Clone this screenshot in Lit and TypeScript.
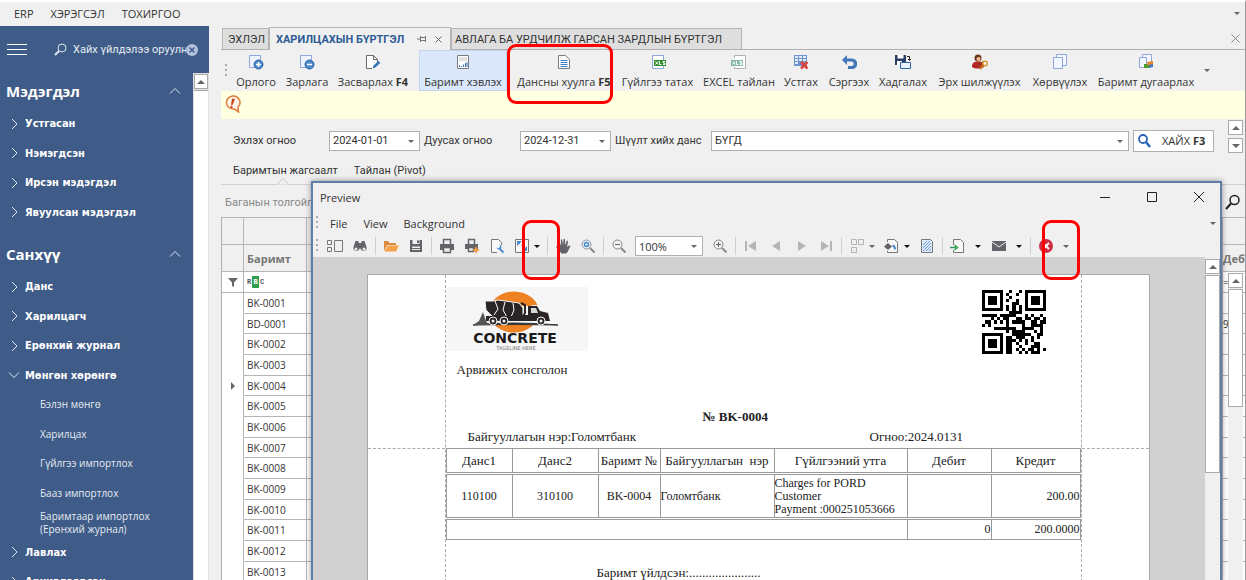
import { LitElement, html, svg, css, nothing } from "lit";
import { customElement } from "lit/decorators.js";

const blueSheet = svg`<path d="M1.500 1.500h11v12h-11z" fill="#eef3ff" stroke="#8fa6dc"/>`;

const I: Record<string, unknown> = {
  add: svg`${blueSheet}<circle cx="10.500" cy="10.500" r="4.500" fill="#4d88c9" stroke="#2e62a8"/><path d="M10.500 8v5M8 10.500h5" stroke="#fff" stroke-width="1.500"/>`,
  sub: svg`${blueSheet}<circle cx="10.500" cy="10.500" r="4.500" fill="#4d88c9" stroke="#2e62a8"/><path d="M8 10.500h5" stroke="#fff" stroke-width="1.500"/>`,
  edit: svg`<path d="M7 14.500H1.500v-13h7l4 4V8M8.500 1.500v4h4" fill="#fff" stroke="#6b6b6b"/><path d="M7.500 14.500l1-3 5-4.500 1.800 2-5 4.600z" fill="#3674b5"/>`,
  report: svg`<path d="M2.500 1.500h11v13h-11z" fill="#fff" stroke="#7a7a7a"/><path d="M4 4h8M4 6h8" stroke="#c3c3c3"/><path d="M4.500 13v-2M6.500 13v-1M8.500 13v-2.500M10.500 13V9M12 13V8" stroke="#3674b5"/>`,
  doc: svg`<path d="M2.500 1.500h7l4 4v9h-11z" fill="#fff" stroke="#7a7a7a"/><path d="M4.500 6.500h7M4.500 8.500h7M4.500 10.500h7M4.500 12.500h7" stroke="#3d7fc6"/>`,
  xls: svg`<path d="M2.500 1.500h11v13h-11z" fill="#fff" stroke="#8fa6dc"/><path d="M4 6h12v6H4z" fill="#2f8f2f"/><path d="M5.500 7.500l2.500 3M8 7.500l-2.500 3M9.500 7v3.500h2M15 7.500h-2V9h2v1.500h-2" stroke="#fff" fill="none"/>`,
  xlsPale: svg`<path d="M3.500 4V1.500h11v13h-11V13" fill="#fff" stroke="#a9b5ad"/><path d="M0 6h12v6H0z" fill="#86b9a3"/><path d="M1.500 7.500l2.500 3M4 7.500l-2.500 3M5.500 7v3.500h2M11 7.500H9V9h2v1.500H9" stroke="#fff" fill="none"/>`,
  del: svg`<path d="M1 1h13v11H1z" fill="#6f93cf"/><path d="M2 2h3v2H2zM6 2h3v2H6zM10 2h3v2h-3zM2 5h3v2H2zM6 5h3v2H6zM10 5h3v2h-3zM2 8h3v2H2z" fill="#e2ecff"/><path d="M8 8l6.500 6.500M14.500 8L8 14.500" stroke="#d9453a" stroke-width="2.500"/>`,
  undo: svg`<path d="M6 1L1 6l5 5V7.500h4.500a2 2 0 0 1 0 4.500H7v3h4a4.500 4.500 0 0 0 0-10.500H6z" fill="#4277b8"/>`,
  save2: svg`<path d="M0 1h11v10H0z" fill="#2c3e66"/><path d="M2.500 1h6v3.500h-6zM2 7h5v4H2z" fill="#fff"/><path d="M12 2.500h2.500V6M13 5l1.500 1.500L16 5" stroke="#222" fill="none"/><path d="M5.500 8.500h10v6h-10z" fill="#eaf2ff" stroke="#2f63a7"/>`,
  user: svg`<circle cx="6" cy="4" r="3.500" fill="#6b3a1e"/><circle cx="6.500" cy="5" r="2" fill="#f1bd92"/><path d="M0 13c0-5 3-5.500 6-5.500s6 1 6 5.500c-3 2-9 2-12 0z" fill="#b32626"/><path d="M6 12l5-5" stroke="#6d4a14"/><circle cx="13" cy="9.500" r="2.200" fill="#fff" stroke="#d9922b" stroke-width="1.500"/><path d="M11.500 11L8 15" stroke="#c47a1e" stroke-width="2"/>`,
  copy: svg`<path d="M4.500.500h10v11h-10z" fill="#f4f7ff" stroke="#8fa6dc"/><path d="M1.500 3.500h9v11h-9z" fill="#f4f7ff" stroke="#8fa6dc"/>`,
  number: svg`<path d="M4.500.500h9v10h-9z" fill="#f4f7ff" stroke="#8fa6dc"/><path d="M1.500 3.500h7v10h-7z" fill="#f4f7ff" stroke="#8fa6dc"/><path d="M6 10h5v4H6z" fill="#4e9c2f"/><path d="M9 8l6-1v4l-5 1z" fill="#e4862a"/><path d="M11 11l4-1v3l-4 1z" fill="#3d74c9"/>`,
  thumbs: svg`<path d="M.500 2.500h4v4h-4zM.500 9.500h4v4h-4zM7.500 2.500h8v11h-8z" fill="none" stroke="#777"/>`,
  find: svg`<path d="M3.500 3h3v2h3V3h3l2 6a3 3 0 1 1-6 1.500h-1A3 3 0 1 1 1.500 9z" fill="#62646a"/><circle cx="4" cy="11" r="1.500" fill="#eee"/><circle cx="12" cy="11" r="1.500" fill="#eee"/>`,
  open: svg`<path d="M1 13V3h4l1.500 2H13v2H4z" fill="#d98a3b"/><path d="M4.500 7.500H16L13 13.500H1.500z" fill="#f6a14a"/>`,
  floppy: svg`<path d="M2 2h12v12H2z" fill="#62646a"/><path d="M4.500 2h7v4h-7zM4 8.500h8V12H4z" fill="#eee"/><path d="M9 2.500h2V5H9zM4 10h8v1H4z" fill="#62646a"/>`,
  print: svg`<path d="M4.500 6V1.500h7V6" fill="#eee" stroke="#62646a" stroke-width="1.500"/><path d="M1 6h14v6H1z" fill="#62646a"/><path d="M4.500 9.500h7v5h-7z" fill="#eee" stroke="#62646a" stroke-width="1.500"/>`,
  quick: svg`<path d="M4.500 6V1.500h6V6" fill="#eee" stroke="#62646a" stroke-width="1.500"/><path d="M1 6h13v5H1z" fill="#62646a"/><path d="M4.500 9.500h5v4h-5z" fill="#eee" stroke="#62646a" stroke-width="1.500"/><path d="M12 8l1.200 2.800L16 12l-2.800 1.200L12 16l-1.200-2.800L8 12l2.800-1.200z" fill="#f39a3c"/>`,
  setup: svg`<path d="M8 14.500H2.500v-13h7l3 3V7" fill="#f7f7f7" stroke="#777"/><path d="M7.500 9.500a2.500 2.500 0 1 0 3-3l.5 2.500-1.500 1.500z" fill="#4a8ccb"/><path d="M10 10l4.500 4.500" stroke="#4a8ccb" stroke-width="2"/>`,
  scale: svg`<path d="M1.500 1.500h13v13h-13z" fill="#f7f7f7" stroke="#777"/><path d="M3 8V3h5zM13 8v5H8z" fill="#4a8ccb"/><path d="M4 4l8 8" stroke="#4a8ccb" stroke-dasharray="3 2"/>`,
  hand: svg`<path d="M4.500 8.500L2.800 3.500l1.200-.500L6 7.500 5.800 1.500h1.400L8 7l.6-6H10l.1 6.200 1.800-4.700 1.200.5-1 6L14 7.500l1.500.500-3 6-1.500 1.500H6.500L1 9l1-1z" fill="#62646a"/>`,
  mag: svg`<circle cx="6.500" cy="6.500" r="4.500" fill="#e2ecf7" stroke="#999"/><circle cx="6.500" cy="6.500" r="2" fill="none" stroke="#4a8ccb" stroke-width="1.500"/><path d="M10 10l4.500 4.500" stroke="#888" stroke-width="2"/>`,
  zout: svg`<circle cx="6.500" cy="6.500" r="4.500" fill="none" stroke="#888"/><path d="M4 6.500h5" stroke="#666"/><path d="M10 10l4.500 4.500" stroke="#888" stroke-width="2"/>`,
  zin: svg`<circle cx="6.500" cy="6.500" r="4.500" fill="none" stroke="#888"/><path d="M4 6.500h5M6.500 4v5" stroke="#666"/><path d="M10 10l4.500 4.500" stroke="#888" stroke-width="2"/>`,
  first: svg`<path d="M3 3v10" stroke="#b5b5b5" stroke-width="2"/><path d="M13 3v10L5 8z" fill="#b5b5b5"/>`,
  prev: svg`<path d="M12 3v10L4 8z" fill="#b5b5b5"/>`,
  next: svg`<path d="M5 3v10l8-5z" fill="#b5b5b5"/>`,
  last: svg`<path d="M3 3v10l8-5z" fill="#b5b5b5"/><path d="M13 3v10" stroke="#b5b5b5" stroke-width="2"/>`,
  multi: svg`<path d="M2.500 1.500h5v5h-5zM9.500 1.500h5v5h-5zM2.500 9.500h5v5h-5z" fill="none" stroke="#b5b5b5"/>`,
  color: svg`<path d="M3.500 4V1.500h7l3 3v10h-10V13" fill="#f7f7f7" stroke="#777"/><path d="M4 5l4 3.500L4 12 0 8.500z" fill="#62646a"/><path d="M8.500 7.500q2.500.500 2.500 4" stroke="#4a8ccb" fill="none" stroke-width="2"/>`,
  water: svg`<path d="M2.500 1.500h9l2 2v11h-11z" fill="#dbe9f8" stroke="#777"/><path d="M4 7l4-4M4 10l7-7M4 13l8-8M7 13l5-5M10 13l2-2" stroke="#6b9fd4"/>`,
  exp: svg`<path d="M3.500 7V1.500h7l3 3v10h-10V12" fill="#f7f7f7" stroke="#777"/><path d="M0 9.500h6M4.500 7l3 2.500-3 2.500" stroke="#2f9e57" fill="none" stroke-width="1.500"/>`,
  mail: svg`<path d="M1 3h14v10H1z" fill="#62646a"/><path d="M1 4l7 5 7-5" stroke="#eee" fill="none"/>`,
  close: svg`<circle cx="8" cy="8" r="7" fill="#cf2b42"/><path d="M5 5l6 6M11 5l-6 6" stroke="#fff" stroke-width="1.800"/>`,
};

const icon = (name: string) =>
  html`<svg class="ic" width="16" height="16" viewBox="0 0 16 16" aria-hidden="true">${I[name]}</svg>`;

const CSS_BASE = css`
  * { box-sizing: border-box; }
  button { font: inherit; color: inherit; background: none; border: 0; padding: 0; }
  select, input { font: inherit; color: inherit; margin: 0; }
  svg { display: block; flex: none; }
  ul { list-style: none; margin: 0; padding: 0; }
  a { color: inherit; text-decoration: none; }
  .tri { display: block; width: 0; height: 0; flex: none; border: 3px solid transparent; border-top-color: #666; border-bottom: 0; }
  .tri.up { border: 4px solid transparent; border-bottom-color: #666; border-top: 0; }
  .tri.dark { border-top-color: #111; }
  .grip { width: 2px; height: 14px; flex: none; background: repeating-linear-gradient(#aaa 0 2px, transparent 2px 5px); }
  .combo { position: relative; display: block; }
  .combo select { width: 100%; height: 20px; padding: 0 3px; appearance: none; background: #fff; border: 1px solid #b0b0b0; border-radius: 0; }
  .combo .tri { position: absolute; right: 6px; top: 9px; }
  .mark { position: absolute; border: 3px solid #f00; border-radius: 9px; pointer-events: none; z-index: 5; }
  .sbtn { display: flex; align-items: center; justify-content: center; width: 15px; height: 15px; background: #fff; border: 1px solid #a9a9a9; }
`;

const UI = css`"Open Sans", "Noto Sans", sans-serif`;
const NARROW = css`Roboto, "Noto Sans", sans-serif`;

@customElement("side-nav")
class SideNav extends LitElement {
  static styles = [CSS_BASE, css`
    :host { display: flex; flex-direction: column; width: 209px; height: 100%; background: #3f5b87; color: #fff; overflow: hidden; }
    .search { display: flex; align-items: center; height: 47px; flex: none; padding: 0 11px 0 7px; font: 11px ${NARROW}; }
    .burger { width: 20px; height: 11px; margin-right: 27px; border-top: 1px solid #fff; border-bottom: 1px solid #fff; background: linear-gradient(#fff, #fff) center / 100% 1px no-repeat; }
    .search input { flex: 1; width: 0; border: 0; padding: 0 0 0 6px; background: none; color: #e6ebf3; outline: 0; }
    .row { display: flex; flex: 1; min-height: 0; }
    nav { flex: 1; overflow: hidden; }
    .bar { width: 16px; padding: 1px; background: #e0e0e0; display: flex; flex-direction: column; gap: 1px; }
    .bar .sbtn { width: 14px; }
    .thumb { flex: 1; background: #fff; border-top: 1px solid #a9a9a9; }
    h2 { display: flex; align-items: center; justify-content: space-between; height: 36px; margin: 0; padding: 0 12px 0 6px; font: bold 15px "Open Sans", sans-serif; }
    section + section { margin-top: 9px; }
    li { display: flex; align-items: center; height: 29px; padding-left: 8px; font: bold 11px "DejaVu Sans Condensed", "DejaVu Sans", sans-serif; }
    li:nth-child(even) { height: 30px; }
    li svg { margin-right: 5px; }
    li.sub { padding-left: 40px; font: 10px/13px ${UI}; color: #e6ebf3; }
    .two { white-space: pre-line; }
  `];
  item(t: string, open = false) {
    return html`<li><svg width="12" height="12" viewBox="0 0 12 12" fill="none" stroke="#dfe6f2">
      <path d=${open ? "M1 3.500l5 5 5-5" : "M4 1l5 5-5 5"} /></svg><a href="#">${t}</a></li>`;
  }
  head(t: string) {
    return html`<h2>${t}<svg width="12" height="8" fill="none" stroke="#dfe6f2"><path d="M1 6.500l5-5 5 5" /></svg></h2>`;
  }
  render() {
    return html`
      <div class="search">
        <button class="burger" aria-label="Цэс"></button>
        <svg width="13" height="13" viewBox="0 0 13 13" fill="none" stroke="#dfe6f2"><circle cx="8" cy="5" r="4" /><path d="M5 8l-4 4" stroke-width="2" /></svg>
        <input aria-label="Хайх" value="Хайх үйлдэлээ оруулн" />
        <svg width="12" height="12" viewBox="0 0 12 12"><circle cx="6" cy="6" r="6" fill="#b3c3dc" /><path d="M3.500 3.500l5 5M8.500 3.500l-5 5" stroke="#3f5b87" stroke-width="1.500" /></svg>
      </div>
      <div class="row">
        <nav>
          <section>${this.head("Мэдэгдэл")}
            <ul>${["Устгасан", "Нэмэгдсэн", "Ирсэн мэдэгдэл", "Явуулсан мэдэгдэл"].map((t) => this.item(t))}</ul>
          </section>
          <section>${this.head("Санхүү")}
            <ul>
              ${["Данс", "Харилцагч", "Ерөнхий журнал"].map((t) => this.item(t))}
              ${this.item("Мөнгөн хөрөнгө", true)}
              ${["Бэлэн мөнгө", "Харилцах", "Гүйлгээ импортлох", "Бааз импортлох", "Баримтаар импортлох\n(Ерөнхий журнал)"].map(
                (t) => html`<li class="sub"><a class="two" href="#">${t}</a></li>`)}
              ${this.item("Лавлах")}${this.item("Архивлагдсан")}
            </ul>
          </section>
        </nav>
        <div class="bar"><button class="sbtn" aria-label="Дээш"><span class="tri up"></span></button><div class="thumb"></div></div>
      </div>`;
  }
}

const TOOLS: [string, string, string?][] = [
  ["add", "Орлого"], ["sub", "Зарлага"], ["edit", "Засварлах", "F4"], ["report", "Баримт хэвлэх"],
  ["doc", "Дансны хуулга", "F5"], ["xls", "Гүйлгээ татах"], ["xlsPale", "EXCEL тайлан"], ["del", "Устгах"],
  ["undo", "Сэргээх"], ["save2", "Хадгалах"], ["user", "Эрх шилжүүлэх"], ["copy", "Хөрвүүлэх"], ["number", "Баримт дугаарлах"],
];

const QR = [
  "111111100100101111111",
  "100000101001001000001",
  "101110100100001011101",
  "101110101001001011101",
  "101110100011001011101",
  "100000101010101000001",
  "111111101010101111111",
  "000000000111100000000",
  "111110111110001010010",
  "000101011001101101101",
  "011010101011110011011",
  "101000001000010011110",
  "000011111110011110010",
  "000000001011110001010",
  "111111100011111100110",
  "100000101101110010100",
  "101110101110101010000",
  "101110101101001001100",
  "101110101100100011100",
  "100000101101010110101",
  "111111101100101011100",
];

@customElement("print-preview")
class PrintPreview extends LitElement {
  static styles = [CSS_BASE, css`
    :host { display: flex; flex-direction: column; background: #f0f0f0; border: 1px solid #5f7ea8; border-width: 2px 2px 0; box-shadow: 0 0 6px #0006; color: #333; font: 11px ${UI}; }
    .title { display: flex; align-items: center; height: 28px; flex: none; padding: 0 12px 0 7px; }
    .title b { flex: 1; font-weight: normal; }
    .title button { margin-left: 29px; }
    .menu { display: flex; align-items: center; height: 24px; flex: none; padding: 0 4px 0 3px; }
    .menu a { margin-left: 12px; margin-right: 4px; }
    .menu .tri { margin-left: auto; }
    .tools { display: flex; align-items: center; height: 22px; flex: none; padding: 0 3px; }
    .tools .grip { margin-right: 4px; }
    .b { width: 25px; height: 22px; display: flex; align-items: center; justify-content: center; flex: none; }
    .a { position: relative; width: 10px; height: 22px; display: flex; align-items: center; flex: none; }
    .a.wide { width: 16px; justify-content: center; }
    .sep { width: 6px; height: 18px; flex: none; background: linear-gradient(#cfcfcf, #cfcfcf) center / 1px 100% no-repeat; }
    .zoom { width: 68px; margin: 0 4px; flex: none; }
    .m1 { left: -12px; width: 38px; top: -15px; height: 60px; }
    .m2 { left: -16px; width: 38px; top: -15px; height: 60px; }
    .body { flex: 1; min-height: 0; display: flex; background: #d1d1d1; }
    .canvas { flex: 1; overflow: hidden; display: flex; justify-content: center; padding: 17px 2px 0 0; }
    .paper { width: 783px; flex: none; background: #fff; border: 1px solid #a8a8a8; border-bottom: 0; color: #222; font: 13px "Liberation Serif", serif;
      display: grid; grid-template-columns: 78px 1fr 68px; }
    .side { display: grid; grid-template-rows: 174px 1fr; }
    .side::before { content: ""; border-bottom: 1px dashed #aaa; }
    .side.l { border-right: 1px dashed #aaa; }
    .side.r { border-left: 1px dashed #aaa; }
    .top { display: flex; justify-content: space-between; height: 77px; padding: 12px 35px 0 0; }
    .qr { margin-top: 3px; }
    .co { margin: 0 0 0 11px; height: 36px; line-height: 36px; }
    .no { margin: 0; padding: 16px 0 0 257px; height: 42px; line-height: 26px; }
    .meta { display: flex; height: 18px; line-height: 14px; padding-left: 22px; }
    .meta span:first-child { width: 402px; }
    table { width: 634px; border-collapse: collapse; table-layout: fixed; }
    th { font-weight: normal; height: 25px; white-space: pre; padding: 0; }
    th, td { border: 1px solid #999; }
    td { padding: 0; text-align: center; font-size: 12px; line-height: 13px; }
    tbody td { height: 45px; border-top: 3px double #999; }
    tfoot td { height: 21px; border-top: 3px double #999; }
    td.l { text-align: left; } td.r { text-align: right; }
    .sign { margin: 26px 0 0 151px; line-height: 14px; }
    .bar { width: 15px; display: flex; flex-direction: column; gap: 1px; padding-top: 2px; background: #f0f0f0; }
    .bar .thumb { height: 198px; background: #fff; border: 1px solid #a9a9a9; }
  `];
  b(n: string, l: string) { return html`<button class="b" aria-label=${l}>${icon(n)}</button>`; }
  a(wide = false, dark = true, mark = "") {
    return html`<button class="a ${wide ? "wide" : ""}" aria-label="More"><span class="tri ${dark ? "dark" : ""}"></span>
      ${mark ? html`<span class="mark ${mark}"></span>` : nothing}</button>`;
  }
  render() {
    const sep = html`<span class="sep"></span>`;
    return html`
      <div class="title"><b>Preview</b>
        <button aria-label="Minimize"><svg width="18" height="18"><path d="M4 9.500h10" stroke="#222" /></svg></button>
        <button aria-label="Maximize"><svg width="18" height="18"><path d="M4.500 4.500h9v9h-9z" fill="none" stroke="#222" /></svg></button>
        <button aria-label="Close"><svg width="18" height="18"><path d="M4 4l10 10M14 4L4 14" stroke="#222" /></svg></button>
      </div>
      <div class="menu"><span class="grip"></span><a href="#">File</a><a href="#">View</a><a href="#">Background</a><span class="tri"></span></div>
      <div class="tools"><span class="grip"></span>
        ${this.b("thumbs", "Thumbnails")}${this.b("find", "Search")}${sep}
        ${this.b("open", "Open")}${this.b("floppy", "Save")}${sep}
        ${this.b("print", "Print")}${this.b("quick", "Quick print")}${this.b("setup", "Page setup")}${this.b("scale", "Scale")}${this.a(false, true, "m1")}${sep}
        ${this.b("hand", "Hand tool")}${this.b("mag", "Magnifier")}${sep}
        ${this.b("zout", "Zoom out")}
        <span class="combo zoom"><select aria-label="Zoom"><option>100%</option></select><span class="tri"></span></span>
        ${this.b("zin", "Zoom in")}${sep}
        ${this.b("first", "First page")}${this.b("prev", "Previous page")}${this.b("next", "Next page")}${this.b("last", "Last page")}${sep}
        ${this.b("multi", "Multiple pages")}${this.a(false, false)}${this.b("color", "Color")}${this.a()}${this.b("water", "Watermark")}${sep}
        ${this.b("exp", "Export")}${this.a(true)}${this.b("mail", "Send")}${this.a(true)}${sep}
        ${this.b("close", "Exit")}${this.a(true, false, "m2")}
      </div>
      <div class="body">
        <div class="canvas"><div class="paper">
          <div class="side l"></div>
          <div>
            <div class="top">
              <svg width="142" height="64" viewBox="0 0 142 64" role="img" aria-label="Concrete">
                <path d="M0 0h142v64H0z" fill="#f6f6f6" />
                <ellipse cx="68" cy="25" rx="25" ry="20.500" fill="#ee8122" />
                <path d="M42 19h42l3-1h12v20H42z" fill="#f6f6f6" />
                <path d="M27 38q40-4 85 0-40-1-85 0z" fill="#333" stroke="#333" />
                <path d="M27 38l6-4 4-9 3 9 3 4z" fill="#555" />
                <path d="M39 14h8l5-1 21 3 4 5v11H60l-12-1-8-8z" fill="#2b2426" stroke="#f6f6f6" />
                <path d="M49 14l3 8-4 6M59 15l-2 8 5 9M67 16l1 7-3 7" stroke="#fff" fill="none" />
                <path d="M75 16l4 2v8l-3 5" stroke="#2b2426" fill="none" stroke-width="2" />
                <path d="M82 19h9l3 5 8 2 2 8H76v-6h6z" fill="#2b2426" />
                <path d="M85 21h5l2 5h-7z" fill="#d8d8d8" />
                <path d="M40 29h40v5H40z" fill="#2b2426" />
                <g fill="#2b2426" stroke="#f6f6f6"><circle cx="47" cy="34" r="4" /><circle cx="58" cy="34" r="4" /><circle cx="95" cy="34" r="4" /></g>
                <g fill="#f6f6f6"><circle cx="47" cy="34" r="1.500" /><circle cx="58" cy="34" r="1.500" /><circle cx="95" cy="34" r="1.500" /></g>
                <text x="69" y="56" text-anchor="middle" font-family="DejaVu Sans" font-weight="bold" font-size="14" fill="#1d1a1b">CONCRETE</text>
                <text x="70" y="63" text-anchor="middle" font-family="DejaVu Sans" font-size="5" fill="#777">TAGELINE HERE</text>
              </svg>
              <svg class="qr" width="64" height="64" viewBox="0 0 21 21" shape-rendering="crispEdges" role="img" aria-label="QR">
                ${QR.flatMap((r, y) => [...r].map((c, x) => c === "1" ? svg`<rect x=${x} y=${y} width="1" height="1"/>` : nothing))}
              </svg>
            </div>
            <p class="co">Арвижих сонсголон</p>
            <p class="no"><b>№ BK-0004</b></p>
            <div class="meta"><span>Байгууллагын нэр:Голомтбанк</span><span>Огноо:2024.0131</span></div>
            <table>
              <colgroup><col width="66" /><col width="86" /><col width="62" /><col width="114" /><col width="133" /><col width="84" /><col width="89" /></colgroup>
              <thead><tr>${["Данс1", "Данс2", "Баримт №", "Байгууллагын  нэр", "Гүйлгээний утга", "Дебит", "Кредит"].map((t) => html`<th>${t}</th>`)}</tr></thead>
              <tbody><tr><td>110100</td><td>310100</td><td>BK-0004</td><td class="l">Голомтбанк</td>
                <td class="l">Charges for PORD Customer<br />Payment :000251053666</td><td></td><td class="r">200.00</td></tr></tbody>
              <tfoot><tr><td colspan="5"></td><td class="r">0</td><td class="r">200.0000</td></tr></tfoot>
            </table>
            <p class="sign">Баримт үйлдсэн:......................</p>
          </div>
          <div class="side r"></div>
        </div></div>
        <div class="bar"><button class="sbtn" aria-label="Up"><span class="tri up"></span></button><div class="thumb"></div></div>
      </div>`;
  }
}

const ROWS = ["BK-0001", "BD-0001", "BK-0002", "BK-0003", "BK-0004", "BK-0005", "BK-0006", "BK-0007", "BK-0008", "BK-0009", "BK-0010", "BK-0011", "BK-0012", "BK-0013"];

@customElement("app-root")
class AppRoot extends LitElement {
  static styles = [CSS_BASE, css`
    :host { display: flex; flex-direction: column; height: 100vh; overflow: hidden; background: #f0f0f0; color: #333; font: 11px ${UI}; border-top: 2px solid #fff; border-right: 1px solid #999; }
    .menubar { display: flex; align-items: center; gap: 17px; height: 24px; flex: none; padding: 0 5px 2px 14px; }
    .menubar .tri { margin-left: auto; }
    .cols { flex: 1; min-height: 0; display: grid; grid-template-columns: 209px minmax(0, 1fr); column-gap: 12px; }
    main { position: relative; display: flex; flex-direction: column; min-width: 0; overflow: hidden; }
    .tabs { display: flex; align-items: flex-end; height: 24px; flex: none; padding-left: 1px; border-bottom: 1px solid #b0b0b0; font-family: ${NARROW}; }
    .tab { display: flex; align-items: center; height: 21px; padding: 0 5px; background: #dedede; border: 1px solid #b5b5b5; border-bottom: 0; white-space: nowrap; }
    .tab.home { width: 47px; }
    .tab.third { width: 291px; padding: 0 3px; }
    .tab.on { width: 182px; height: 23px; margin-bottom: -1px; background: #f0f0f0; color: #2c5b95; font-weight: bold; padding: 0 8px 0 6px; gap: 8px; }
    .tab.on span { flex: 1; text-align: left; }
    .x { margin: 0 5px 6px auto; }
    .tools { display: grid; grid-template-columns: 10px 50px 52px 80px 98px 106px 81px 82px 42px 54px 54px 99px 62px 110px 12px; align-items: stretch; height: 41px; flex: none; }
    .tools .grip { align-self: center; margin-left: 4px; }
    .tools .tri { align-self: center; justify-self: center; }
    .tool { position: relative; display: flex; flex-direction: column; align-items: center; gap: 4px; padding-top: 4px; white-space: nowrap; line-height: 16px; }
    .tool.on { margin: 0 4px 0 6px; background: #dbe7fa; border: 1px solid #c2d4ee; padding-top: 3px; }
    .m0 { left: -4px; right: 4px; top: -6px; height: 60px; }
    .info { height: 28px; flex: none; padding: 4px 3px; background: #ffffe1; }
    .filters { display: grid; grid-template-columns: minmax(0, 1fr) 15px; gap: 14px; height: 37px; flex: none; padding: 1px 2px 0 12px; font-family: ${NARROW}; }
    form { display: grid; grid-template-columns: 92px 91px 92px 91px 92px minmax(0, 1fr) 81px; column-gap: 4px; align-items: center; padding-top: 6px; height: 35px; }
    .go { display: flex; align-items: center; gap: 11px; height: 22px; padding-left: 4px; background: #fff; border: 1px solid #b0b0b0; font-family: ${UI}; }
    .spin { display: flex; flex-direction: column; gap: 3px; }
    .spin .down { border: 4px solid transparent; border-top-color: #666; border-bottom: 0; }
    .subtabs { display: flex; gap: 16px; height: 29px; flex: none; align-items: center; padding: 0 12px; border-bottom: 1px solid #d0d0d0; position: relative; font-family: ${NARROW}; }
    .notch { position: absolute; left: 56px; bottom: -1px; }
    .group { display: flex; align-items: center; justify-content: space-between; height: 33px; flex: none; padding: 2px 4px 0; color: #888; border-bottom: 1px solid #b5b5b5; font-family: ${NARROW}; }
    .grid { position: relative; flex: 1; min-height: 0; overflow: hidden; background: #fff; border-left: 1px solid #b0b0b0; font-size: 10px; }
    table { width: 100%; border-collapse: separate; border-spacing: 0; table-layout: fixed; }
    th, td { padding: 0 3px; text-align: left; white-space: nowrap; overflow: hidden; border-right: 1px solid #b5b5b5; border-bottom: 1px solid #b5b5b5; }
    th { height: 27px; background: #f0f0f0; color: #777; font-weight: bold; font-size: 11px; }
    th:last-child, td:last-child { border-right: 0; padding: 0; }
    td { height: 21px; }
    tbody tr:nth-child(3n) td { height: 20px; }
    tbody td:first-child { border-bottom-color: transparent; }
    tbody td:first-child > * { margin: 0 auto; }
    tbody tr.f td:first-child { border-bottom-color: #b5b5b5; }
    .cur { width: 0; height: 0; display: block; border: 4px solid transparent; border-left-color: #666; border-right: 0; }
    .vs { position: absolute; right: 2px; top: 55px; bottom: 0; width: 15px; background: #f0f0f0; display: flex; flex-direction: column; gap: 1px; }
    .vs .thumb { height: 118px; background: #fff; border: 1px solid #a9a9a9; }
    print-preview { position: absolute; left: 90px; right: 23px; top: 155px; bottom: 0; z-index: 3; }
  `];
  render() {
    return html`
      <header class="menubar"><a href="#">ERP</a><a href="#">ХЭРЭГСЭЛ</a><a href="#">ТОХИРГОО</a><span class="tri"></span></header>
      <div class="cols">
        <side-nav></side-nav>
        <main>
          <div class="tabs">
            <button class="tab home">ЭХЛЭЛ</button>
            <button class="tab on"><span>ХАРИЛЦАХЫН БҮРТГЭЛ</span>
              <svg width="10" height="8" fill="none" stroke="#777"><path d="M0 4h3M3.500 1v6M3.500 2.500h5v3h-5M8.500 1v6" /></svg>
              <svg width="7" height="7" stroke="#666"><path d="M.500.500l6 6M6.500.500l-6 6" /></svg></button>
            <button class="tab third">АВЛАГА БА УРДЧИЛЖ ГАРСАН ЗАРДЛЫН БҮРТГЭЛ</button>
            <button class="x" aria-label="Хаах"><svg width="9" height="9" stroke="#888"><path d="M.500.500l8 8M8.500.500l-8 8" /></svg></button>
          </div>
          <div class="tools"><span class="grip"></span>
            ${TOOLS.map(([n, t, k]) => html`<button class="tool ${n === "report" ? "on" : ""}">${icon(n)}<span>${t}${k ? html` <b>${k}</b>` : nothing}</span>
              ${n === "doc" ? html`<span class="mark m0"></span>` : nothing}</button>`)}
            <span class="tri"></span>
          </div>
          <div class="info"><svg width="18" height="18" viewBox="0 0 18 18"><path d="M8.500 1a7 6.500 0 1 0 2 13l4 3-.500-5A7 6.500 0 0 0 8.500 1z" fill="#fff6ea" stroke="#e07b3a" stroke-width="1.500" /><path d="M8 3.500l3 .500-2.500 6H7z" fill="#c8431f" /><circle cx="7.500" cy="12" r="1.200" fill="#c8431f" /></svg></div>
          <div class="filters">
            <form>
              <label for="d1">Эхлэх огноо</label><span class="combo"><select id="d1"><option>2024-01-01</option></select><span class="tri"></span></span>
              <label for="d2">Дуусах огноо</label><span class="combo"><select id="d2"><option>2024-12-31</option></select><span class="tri"></span></span>
              <label for="ac">Шүүлт хийх данс</label><span class="combo"><select id="ac"><option>БҮГД</option></select><span class="tri"></span></span>
              <button type="button" class="go"><svg width="13" height="14" fill="none" stroke="#2a63b8"><circle cx="5" cy="5" r="4" stroke-width="1.800" /><path d="M8 8l4 5" stroke-width="2.500" /></svg><span>ХАЙХ <b>F3</b></span></button>
            </form>
            <div class="spin"><button class="sbtn" aria-label="Дээш"><span class="tri up"></span></button><button class="sbtn" aria-label="Доош"><span class="tri down"></span></button></div>
          </div>
          <div class="subtabs"><a href="#">Баримтын жагсаалт</a><a href="#">Тайлан (Pivot)</a>
            <svg class="notch" width="12" height="7" fill="#f0f0f0" stroke="#c4c4c4"><path d="M0 6.500l6-6 6 6" /></svg></div>
          <div class="group"><span>Баганын толгойг</span><svg width="16" height="16" fill="none" stroke="#222"><circle cx="9.500" cy="6" r="4.500" stroke-width="1.500" /><path d="M6 9.500L1 15" stroke-width="2" /></svg></div>
          <div class="grid">
            <table>
              <colgroup><col width="22" /><col width="63" /><col /><col width="22" /></colgroup>
              <thead><tr><th></th><th></th><th></th><th></th></tr><tr><th></th><th>Баримт</th><th></th><th>Деб</th></tr></thead>
              <tbody>
                <tr class="f"><td><svg width="10" height="9"><path d="M0 0h10L6 4.500V9L4 8V4.500z" fill="#666" /></svg></td>
                  <td><svg width="18" height="12" viewBox="0 0 18 12"><path d="M5 0h7v12H5z" fill="#2f9e4d" /><g font-family="Liberation Mono" font-size="7" font-weight="bold" fill="#555"><text x="0" y="8">R</text><text x="6.500" y="8" fill="#fff">B</text><text x="13" y="8">C</text></g></svg></td><td></td><td>=</td></tr>
                ${ROWS.map((r, i) => html`<tr><td>${i === 4 ? html`<span class="cur"></span>` : nothing}</td><td>${r}</td><td></td><td>${i === 1 ? "9" : ""}</td></tr>`)}
              </tbody>
            </table>
            <div class="vs"><button class="sbtn" aria-label="Дээш"><span class="tri up"></span></button><div class="thumb"></div></div>
          </div>
          <print-preview></print-preview>
        </main>
      </div>`;
  }
}
